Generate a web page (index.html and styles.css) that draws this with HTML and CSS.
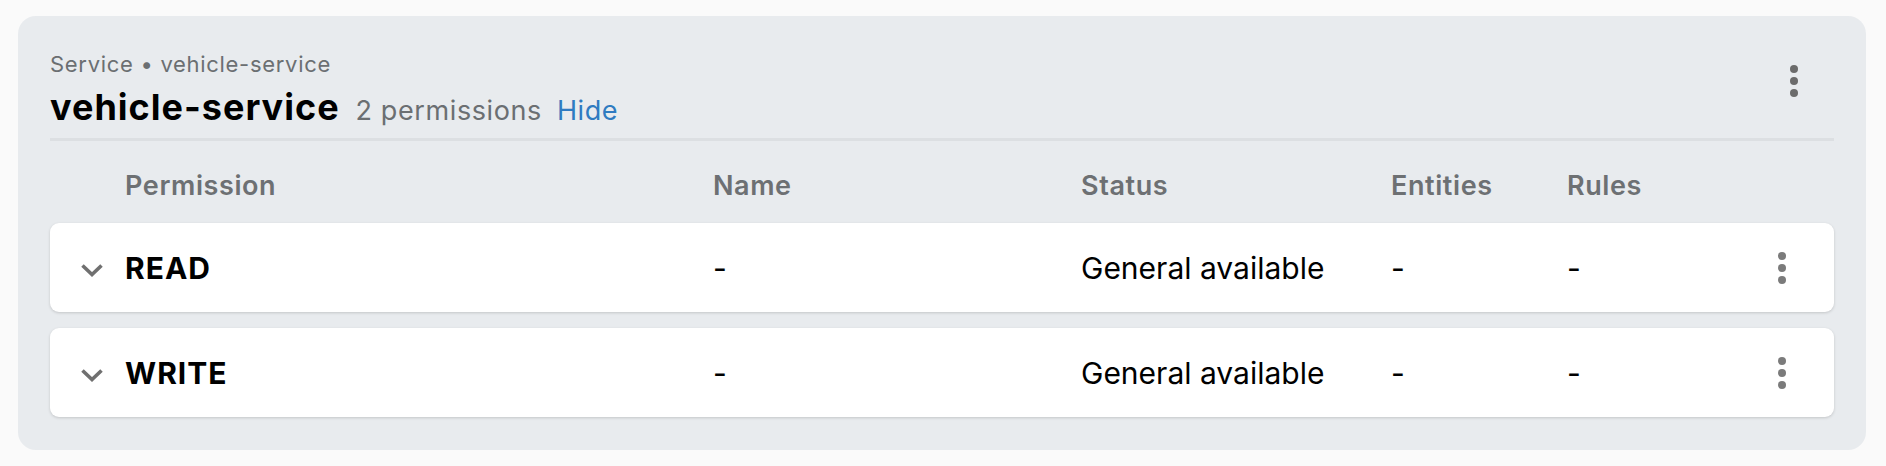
FILE: index.html
```html
<!DOCTYPE html>
<html lang="en">
<head>
<meta charset="utf-8">
<title>vehicle-service</title>
<link rel="stylesheet" href="styles.css">
</head>
<body>
<section class="service-card">
  <header class="service-head">
    <div class="head-text">
      <div class="breadcrumb">Service • vehicle-service</div>
      <div class="title-line">
        <h1 class="title">vehicle-service</h1>
        <span class="count">2 permissions</span>
        <a class="hide-link" href="#">Hide</a>
      </div>
    </div>
    <button class="kebab kebab-head" aria-label="More">
      <svg width="8" height="32" viewBox="0 0 8 32"><circle cx="4" cy="4" r="4"/><circle cx="4" cy="16" r="4"/><circle cx="4" cy="28" r="4"/></svg>
    </button>
  </header>
  <div class="divider"></div>
  <div class="grid col-head">
    <span></span>
    <span>Permission</span>
    <span>Name</span>
    <span>Status</span>
    <span>Entities</span>
    <span>Rules</span>
    <span></span>
  </div>
  <div class="rows">
    <div class="grid row">
      <span class="chev"><svg width="24" height="14" viewBox="0 0 24 14"><polyline points="2.5,2.5 12,11.5 21.5,2.5"/></svg></span>
      <span class="perm">READ</span>
      <span>-</span>
      <span>General available</span>
      <span>-</span>
      <span>-</span>
      <button class="kebab kebab-row" aria-label="More">
        <svg width="8" height="32" viewBox="0 0 8 32"><circle cx="4" cy="4" r="4"/><circle cx="4" cy="16" r="4"/><circle cx="4" cy="28" r="4"/></svg>
      </button>
    </div>
    <div class="grid row">
      <span class="chev"><svg width="24" height="14" viewBox="0 0 24 14"><polyline points="2.5,2.5 12,11.5 21.5,2.5"/></svg></span>
      <span class="perm">WRITE</span>
      <span>-</span>
      <span>General available</span>
      <span>-</span>
      <span>-</span>
      <button class="kebab kebab-row" aria-label="More">
        <svg width="8" height="32" viewBox="0 0 8 32"><circle cx="4" cy="4" r="4"/><circle cx="4" cy="16" r="4"/><circle cx="4" cy="28" r="4"/></svg>
      </button>
    </div>
  </div>
</section>
</body>
</html>
```

FILE: styles.css
```css
* { box-sizing: border-box; }

html, body {
  margin: 0;
  padding: 0;
  background: #fafafa;
}

body {
  padding: 16px 20px 0 18px;
  font-family: Inter, "Noto Sans", sans-serif;
  color: #000;
}

.service-card {
  background: #e8ebee;
  border-radius: 18px;
  padding: 34px 32px 33px 32px;
}

.service-head {
  display: flex;
  justify-content: space-between;
  align-items: flex-start;
}

.head-text {
  display: flex;
  flex-direction: column;
  gap: 8px;
}

.breadcrumb {
  font-size: 22px;
  line-height: 28px;
  color: #6b6f72;
  letter-spacing: 0.7px;
}

.title-line {
  display: flex;
  align-items: baseline;
  height: 42px;
}

.title {
  margin: 0;
  font-size: 36px;
  line-height: 42px;
  font-weight: 700;
  letter-spacing: 1px;
}

.count {
  margin-left: 16px;
  font-size: 27px;
  color: #6b6f72;
  letter-spacing: 0.6px;
}

.hide-link {
  margin-left: 15px;
  font-size: 27px;
  color: #2f7bc1;
  text-decoration: none;
  letter-spacing: 0.6px;
}

.kebab {
  border: 0;
  background: transparent;
  padding: 0;
  width: 40px;
  height: 40px;
  display: flex;
  align-items: center;
  justify-content: center;
}

.kebab-head {
  margin-top: 11px;
  margin-right: 20px;
  fill: #6b6b6b;
}

.kebab-row {
  fill: #7b7b7b;
  justify-self: end;
  margin-right: 32px;
}

.divider {
  height: 3px;
  background: #dcdfe2;
  margin-top: 10px;
}

.grid {
  display: grid;
  grid-template-columns: 75px 588px 368px 310px 176px 1fr 72px;
  align-items: center;
}

.col-head {
  padding: 28px 0 20px 0;
  font-size: 27px;
  line-height: 34px;
  font-weight: 600;
  color: #6d7073;
  letter-spacing: 0.6px;
}

.rows {
  display: flex;
  flex-direction: column;
  gap: 16px;
}

.row {
  background: #fff;
  border-radius: 9px;
  height: 89px;
  box-shadow: 0 1px 3px rgba(0, 0, 0, 0.16);
  font-size: 30px;
}

.chev {
  padding-left: 30px;
  padding-top: 5px;
  display: flex;
  align-items: center;
}

.chev polyline {
  fill: none;
  stroke: #707070;
  stroke-width: 3.6;
}

.perm {
  font-weight: 700;
  letter-spacing: 1px;
}
```
